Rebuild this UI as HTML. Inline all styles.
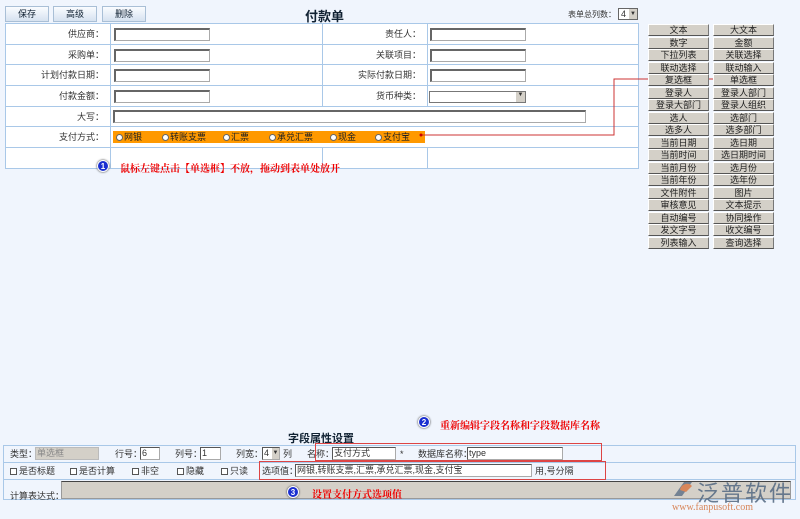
<!DOCTYPE html>
<html><head><meta charset="utf-8"><style>
*{box-sizing:border-box;margin:0;padding:0}
body{width:800px;height:519px;background:#f0f5fd;font-family:"Liberation Sans","Noto Sans CJK SC",sans-serif;font-size:9px;color:#333;position:relative;overflow:hidden}
.a{position:absolute}
.btn{position:absolute;top:6px;height:16px;width:44px;border:1px solid #a9bfd6;background:linear-gradient(#fafcff,#d6e2f0);text-align:center;line-height:14px;font-size:9px;color:#123}
.cell{position:absolute;border-right:1px solid #a9c8e8;border-bottom:1px solid #a9c8e8;background:#fff}
.lab{text-align:right;padding-right:6px;line-height:20px}
.inp{position:absolute;height:13px;border:1px solid #aaa;border-top:2px solid #666;border-left:2px solid #666;background:#fff}
.bi{position:absolute;height:13px;border:1px solid #aaa;border-top:1px solid #555;border-left:1px solid #555;background:#fff;font-size:9px;line-height:11px;padding-left:1px;white-space:nowrap;overflow:hidden}
.rb{position:absolute;width:61px;height:12px;background:#d4d0c8;border:1px solid #fff;border-right:1px solid #777;border-bottom:1px solid #555;text-align:center;line-height:10px;font-size:9px;color:#222}
.red{color:#e00;font-weight:bold;font-family:"Noto Serif CJK SC",serif;font-size:10px}
.num{position:absolute;width:12px;height:12px;border-radius:50%;background:#1a2fd0;border:1px solid #fff;box-shadow:0 0 2px #333;color:#fff;font-size:8px;text-align:center;line-height:11px;font-weight:bold}
.radio{display:inline-block;width:7px;height:7px;border-radius:50%;background:#fff;border:1px solid #666;margin-right:1px;vertical-align:-1px}
.chk{display:inline-block;width:7px;height:7px;border:1px solid #555;background:#fff;margin-right:2px;vertical-align:-1px}
.t{position:absolute;font-size:9px;line-height:12px;white-space:nowrap}
</style></head><body>
<div class="btn" style="left:5px">保存</div>
<div class="btn" style="left:53px">高级</div>
<div class="btn" style="left:102px">删除</div>
<div class="a" style="left:305px;top:6px;font-size:13px;font-weight:bold;color:#123">付款单</div>
<div class="a" style="left:568px;top:9px;font-size:8px">表单总列数：</div>
<div class="a" style="left:618px;top:8px;width:20px;height:12px;border:1px solid #666;background:#fff;font-size:9px;line-height:10px;padding-left:2px">4<span style="position:absolute;right:0;top:0;width:8px;height:10px;background:#d4d0c8;font-size:6px;text-align:center">▼</span></div>

<div class="a" style="left:5px;top:23px;width:634px;height:146px;border-top:1px solid #a9c8e8;border-left:1px solid #a9c8e8;background:#fff"></div>
<div class="cell lab" style="left:6px;top:24px;width:105px;height:21px">供应商：</div>
<div class="cell" style="left:111px;top:24px;width:212px;height:21px"></div>
<div class="cell lab" style="left:323px;top:24px;width:105px;height:21px">责任人：</div>
<div class="cell" style="left:428px;top:24px;width:211px;height:21px"></div>
<div class="cell lab" style="left:6px;top:45px;width:105px;height:20px">采购单：</div>
<div class="cell" style="left:111px;top:45px;width:212px;height:20px"></div>
<div class="cell lab" style="left:323px;top:45px;width:105px;height:20px">关联项目：</div>
<div class="cell" style="left:428px;top:45px;width:211px;height:20px"></div>
<div class="cell lab" style="left:6px;top:65px;width:105px;height:21px">计划付款日期：</div>
<div class="cell" style="left:111px;top:65px;width:212px;height:21px"></div>
<div class="cell lab" style="left:323px;top:65px;width:105px;height:21px">实际付款日期：</div>
<div class="cell" style="left:428px;top:65px;width:211px;height:21px"></div>
<div class="cell lab" style="left:6px;top:86px;width:105px;height:21px">付款金额：</div>
<div class="cell" style="left:111px;top:86px;width:212px;height:21px"></div>
<div class="cell lab" style="left:323px;top:86px;width:105px;height:21px">货币种类：</div>
<div class="cell" style="left:428px;top:86px;width:211px;height:21px"></div>
<div class="cell lab" style="left:6px;top:107px;width:105px;height:20px">大写：</div>
<div class="cell" style="left:111px;top:107px;width:528px;height:20px"></div>
<div class="cell lab" style="left:6px;top:127px;width:105px;height:21px">支付方式：</div>
<div class="cell" style="left:111px;top:127px;width:528px;height:21px"></div>
<div class="cell" style="left:6px;top:148px;width:105px;height:21px"></div>
<div class="cell" style="left:111px;top:148px;width:212px;height:21px"></div>
<div class="cell" style="left:323px;top:148px;width:105px;height:21px"></div>
<div class="cell" style="left:428px;top:148px;width:211px;height:21px"></div>

<div class="inp" style="left:114px;top:28px;width:96px"></div>
<div class="inp" style="left:114px;top:49px;width:96px"></div>
<div class="inp" style="left:114px;top:69px;width:96px"></div>
<div class="inp" style="left:114px;top:90px;width:96px"></div>
<div class="inp" style="left:430px;top:28px;width:96px"></div>
<div class="inp" style="left:430px;top:49px;width:96px"></div>
<div class="inp" style="left:430px;top:69px;width:96px"></div>
<div class="a" style="left:429px;top:91px;width:97px;height:12px;border:1px solid #777;background:#fff"><span style="position:absolute;right:0;top:0;width:9px;height:10px;background:#d4d0c8;font-size:6px;text-align:center">▼</span></div>
<div class="inp" style="left:113px;top:110px;width:473px"></div>
<div class="a" style="left:113px;top:131px;width:312px;height:12px;background:#f90;font-size:9px;line-height:12px;color:#222">
<span class="a" style="left:3px"><span class="radio"></span>网银</span>
<span class="a" style="left:49px"><span class="radio"></span>转账支票</span>
<span class="a" style="left:110px"><span class="radio"></span>汇票</span>
<span class="a" style="left:156px"><span class="radio"></span>承兑汇票</span>
<span class="a" style="left:217px"><span class="radio"></span>现金</span>
<span class="a" style="left:262px"><span class="radio"></span>支付宝</span>
</div>
<div class="num" style="left:97px;top:160px">1</div>
<div class="a red" style="left:120px;top:160px">鼠标左键点击【单选框】不放，拖动到表单处放开</div>

<svg class="a" style="left:0;top:0" width="800" height="519"><polyline points="421,135 614,135 614,79 718,79" fill="none" stroke="#c33" stroke-width="1"/><circle cx="421" cy="135" r="1.5" fill="#c00"/><circle cx="718" cy="79" r="1.5" fill="#c00"/></svg>

<div id="pal"></div>
<script>
var a=["文本","大文本","数字","金额","下拉列表","关联选择","联动选择","联动输入","复选框","单选框","登录人","登录人部门","登录大部门","登录人组织","选人","选部门","选多人","选多部门","当前日期","选日期","当前时间","选日期时间","当前月份","选月份","当前年份","选年份","文件附件","图片","审核意见","文本提示","自动编号","协同操作","发文字号","收文编号","列表输入","查询选择"];
var h="";for(var i=0;i<a.length;i++){var r=Math.floor(i/2),c=i%2;h+='<div class="rb" style="left:'+(648+c*65)+'px;top:'+(24+r*12.5)+'px">'+a[i]+'</div>';}
document.getElementById("pal").innerHTML=h;
</script>

<div class="num" style="left:418px;top:416px">2</div>
<div class="a red" style="left:440px;top:417px">重新编辑字段名称和字段数据库名称</div>
<div class="a" style="left:288px;top:430px;font-size:11px;font-weight:bold;color:#123">字段属性设置</div>
<div class="a" style="left:3px;top:445px;width:793px;height:55px;border:1px solid #a9c8e8;background:#f0f5fd"></div>
<div class="a" style="left:3px;top:462px;width:793px;height:1px;background:#a9c8e8"></div>
<div class="a" style="left:3px;top:479px;width:793px;height:1px;background:#a9c8e8"></div>

<div class="t" style="left:10px;top:448px">类型：</div>
<div class="bi" style="left:35px;top:447px;width:64px;background:#d4d0c8;color:#888;border-color:#bbb">单选框</div>
<div class="t" style="left:115px;top:448px">行号：</div>
<div class="bi" style="left:140px;top:447px;width:20px">6</div>
<div class="t" style="left:175px;top:448px">列号：</div>
<div class="bi" style="left:200px;top:447px;width:21px">1</div>
<div class="t" style="left:236px;top:448px">列宽：</div>
<div class="bi" style="left:262px;top:447px;width:18px">4<span style="position:absolute;right:0;top:0;width:7px;height:11px;background:#d4d0c8;font-size:6px;text-align:center">▼</span></div>
<div class="t" style="left:283px;top:448px">列</div>
<div class="t" style="left:307px;top:448px">名称：</div>
<div class="bi" style="left:332px;top:447px;width:64px">支付方式</div>
<div class="t" style="left:400px;top:448px">*</div>
<div class="t" style="left:418px;top:448px">数据库名称：</div>
<div class="bi" style="left:467px;top:447px;width:96px">type</div>
<div class="a" style="left:315px;top:443px;width:287px;height:18px;border:1px solid #d44"></div>

<div class="t" style="left:10px;top:465px"><span class="chk"></span>是否标题</div>
<div class="t" style="left:70px;top:465px"><span class="chk"></span>是否计算</div>
<div class="t" style="left:132px;top:465px"><span class="chk"></span>非空</div>
<div class="t" style="left:177px;top:465px"><span class="chk"></span>隐藏</div>
<div class="t" style="left:221px;top:465px"><span class="chk"></span>只读</div>
<div class="t" style="left:262px;top:465px">选项值：</div>
<div class="bi" style="left:295px;top:464px;width:237px">网银,转账支票,汇票,承兑汇票,现金,支付宝</div>
<div class="t" style="left:535px;top:465px">用,号分隔</div>
<div class="a" style="left:259px;top:461px;width:347px;height:19px;border:1px solid #d44"></div>

<div class="t" style="left:10px;top:490px">计算表达式：</div>
<div class="a" style="left:61px;top:481px;width:730px;height:18px;background:#d4d0c8;border:1px solid #999;border-top:1px solid #444"></div>
<div class="num" style="left:287px;top:486px">3</div>
<div class="a red" style="left:312px;top:486px">设置支付方式选项值</div>
<div class="a" style="left:670px;top:478px;width:26px;height:22px;"><svg width="26" height="22"><path d="M4 18 L14 4 L22 4 L12 18 Z" fill="#5a6e86" opacity=".8"/><path d="M10 12 A7 7 0 0 1 22 8 L16 14 Z" fill="#d8865a"/></svg></div>
<div class="a" style="left:697px;top:476px;font-size:22px;color:#5a6e86;letter-spacing:2px;font-family:'Noto Sans CJK SC',sans-serif;opacity:.9">泛普软件</div>
<div class="a" style="left:672px;top:502px;font-size:10px;color:#d8865a;font-family:'Liberation Serif',serif">www.fanpusoft.com</div>
</body></html>
